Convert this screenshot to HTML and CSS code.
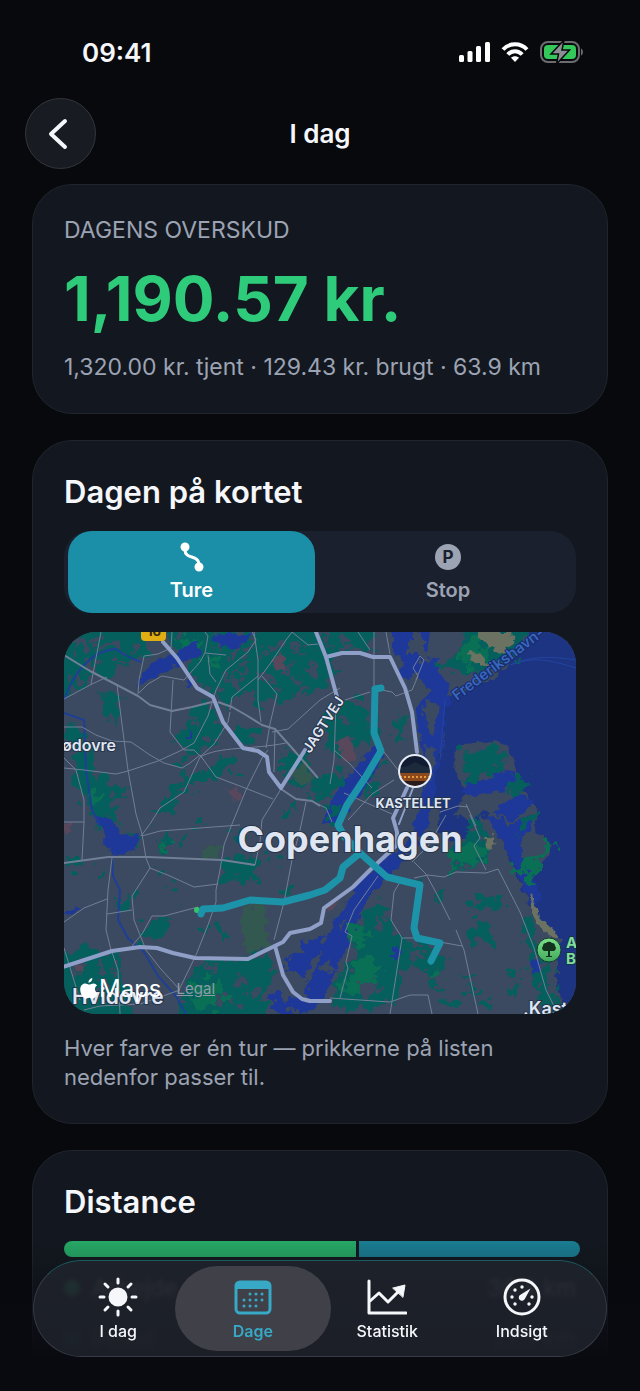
FILE: index.html
```html
<!DOCTYPE html>
<html lang="da">
<head>
  <meta charset="UTF-8">
  <meta name="viewport" content="width=device-width, initial-scale=1.0">
  <title>I dag</title>
  <link rel="stylesheet" href="styles.css">
</head>
<body>
  <div class="app">
    <div class="status-bar">
      <span class="status-time">09:41</span>
      <div class="status-icons">
        <svg width="31" height="20" viewBox="0 0 31 20" fill="#fff" aria-hidden="true">
          <rect x="0" y="13" width="5" height="7" rx="1.5"/>
          <rect x="8.500" y="9" width="5" height="11" rx="1.5"/>
          <rect x="17" y="4" width="5" height="16" rx="1.5"/>
          <rect x="26" y="0" width="5" height="20" rx="1.5"/>
        </svg>
        <svg width="28" height="20" viewBox="0 0 28 20" fill="none" stroke="#fff" stroke-width="4" aria-hidden="true">
          <path d="M2 7.500C8.500 .5 19.500 .5 26 7.500"/>
          <path d="M6.800 12.500C11 8 17 8 21.200 12.500"/>
          <path d="M14 20l-4-4.200c2.400-2 5.600-2 8 0z" fill="#fff" stroke="none"/>
        </svg>
        <svg width="44" height="22" viewBox="0 0 44 22" fill="none" aria-hidden="true">
          <rect x="1" y="1" width="38" height="20" rx="7" stroke="#6b6c70" stroke-width="2"/>
          <path d="M41 7.500c2.600 1 2.600 6 0 7z" fill="#6b6c70"/>
          <rect x="4" y="4" width="32" height="14" rx="4" fill="#34c759"/>
          <path d="M24 -1L11 13h7.500L16.500 23 29.500 9H22z" fill="#8b8f94" stroke="#08090d" stroke-width="1.500"/>
        </svg>
      </div>
    </div>

    <header class="nav-bar">
      <button class="back-button" aria-label="Tilbage">
        <svg width="20" height="32" viewBox="0 0 20 32" fill="none" stroke="#f5f7fb" stroke-width="4" stroke-linecap="round" stroke-linejoin="round"><path d="M17 3L3 16l14 13"/></svg>
      </button>
      <h1 class="nav-title">I dag</h1>
    </header>

    <main class="content">
      <section class="card summary">
        <h2 class="summary-label">DAGENS OVERSKUD</h2>
        <p class="summary-amount">1,190.57 kr.</p>
        <p class="summary-detail">1,320.00 kr. tjent · 129.43 kr. brugt · 63.9 km</p>
      </section>

      <section class="card">
        <h2 class="card-title">Dagen på kortet</h2>
        <div class="segments">
          <button class="segment active" aria-pressed="true">
            <svg width="24" height="30" viewBox="0 0 24 30" fill="none" stroke="#fff" stroke-width="3" stroke-linecap="round" aria-hidden="true">
              <circle cx="5" cy="5" r="3" fill="#fff"/>
              <circle cx="19" cy="25" r="3" fill="#fff"/>
              <path d="M5 8c0 10 14 4 14 15"/>
            </svg>
            <span>Ture</span>
          </button>
          <button class="segment" aria-pressed="false">
            <span class="parking-icon">P</span>
            <span>Stop</span>
          </button>
        </div>

        <div class="map">
          <svg class="map-canvas" viewBox="64 632 512 382" preserveAspectRatio="xMidYMid slice" role="img" aria-label="Copenhagen" color-interpolation-filters="sRGB">
            <defs>
              <linearGradient id="park-pin" x1="0" y1="0" x2="0" y2="1">
                <stop offset="0" stop-color="#7ee08a"/>
                <stop offset="1" stop-color="#3fa95a"/>
              </linearGradient>
              <clipPath id="photo-clip"><circle cx="415" cy="771" r="15"/></clipPath>
              <!-- roughens the edges of land use areas -->
              <filter id="rough" filterUnits="userSpaceOnUse" x="44" y="612" width="552" height="422">
                <feTurbulence type="fractalNoise" baseFrequency="0.09" numOctaves="3" seed="4"/>
                <feDisplacementMap in="SourceGraphic" scale="30" xChannelSelector="R" yChannelSelector="G"/>
              </filter>
              <filter id="rough-small" filterUnits="userSpaceOnUse" x="44" y="612" width="552" height="422">
                <feTurbulence type="fractalNoise" baseFrequency="0.12" numOctaves="2" seed="9"/>
                <feDisplacementMap in="SourceGraphic" scale="11" xChannelSelector="R" yChannelSelector="G"/>
              </filter>
            </defs>

            <g filter="url(#rough-small)">
              <!-- sea -->
              <path fill="#1d3483" d="M540 612L520 650 510 665 480 685 450 697 443 715 445 740 437 770 433 798 441 812 436 832 452 842 470 836 480 815 492 822 505 850 523 892 532 915 543 928 560 938 557 958 557 988 570 1034H596V612z"/>
              <path fill="#1e389a" d="M392 612H432L428 650 442 662 436 670 452 686 444 698 430 690 420 680 418 668 408 682 400 676 404 660 396 654 392 650z"/>
              <path fill="#1e389a" d="M432 690L452 696 446 712 444 740 438 770 434 800 428 826 414 850 392 874 372 892 358 918 346 948 334 976 318 1006 300 1014 288 1004 300 994 312 978 322 952 330 930 348 900 364 876 388 858 410 838 418 810 424 780 422 750 416 706z"/>
              <path fill="#1e389a" d="M378 744L384 756 364 790 346 812 336 824 324 824 326 808 344 780z"/>

              <!-- islands in the harbour -->
              <path fill="#3b4a60" d="M424 700l14 4-4 30-8-6zM426 744l10 6-4 30-8 10zM432 810l8-4-4 24-10 12z"/>
              <path fill="#3b4a60" d="M454 752l8-8 30-2 16 2 6 22 10 26 14 20-4 18 18 14-8 18-20 20-8-14-18-34-14-24-12 10-16-4 10-22-10-22z"/>
              <path fill="#1e389a" d="M466 780l22-2 18-8 14 8-20 14-26 4-14-4zM492 812l26-18 18 8-24 20zM504 834l10-12 18-6-4 16-12 18zM476 750l20 2 4 10-14-2z"/>
              <path fill="#1e389a" d="M488 816L502 818 530 868 542 900 530 906 514 866z"/>
            </g>

            <!-- parks -->
            <g fill="#055f5c" filter="url(#rough)">
              <path d="M54 622H146L150 650 140 664 124 662 110 680 94 668 80 690 54 704z"/>
              <path d="M166 622H226L250 636 256 660 232 672 216 690 200 684 190 668 178 660 170 644z"/>
              <path d="M256 622H316L332 660 334 682 318 692 300 690 284 704 270 696 262 710 250 690 236 694 228 712 218 704 222 682 252 668z"/>
              <path d="M328 622H370L372 648 344 650 330 656z"/>
              <path d="M184 722l18-20 14 10 8 20-16 20-10-4-8 12-10-18z"/>
              <path d="M234 728l14-4 10 12-8 10-12-6zM104 692l14-4 4 14-8 20-8-10z"/>
              <path d="M64 726l18-2 6 20 8 36-6 30-12-20-4-30-10-18z"/>
              <path d="M88 786l12-12 14 14-4 24 8 12-16 6-10-18zM114 788l14 2-6 8-10-2z"/>
              <path d="M170 792l14-14 24-8 14-14 12-2-4 14-16 10-24 8-16 16-14 16-8-4z"/>
              <path d="M170 762l12-4 6 8-6 4zM276 760l18-12 12 10 10 26-14 4-18-14z"/>
              <path d="M330 710l20-12 18 8 2 30-18 18-20-4-8-18zM310 790l16-18 20-4-8 22-18 14-10-4zM328 812l14-6-6 14-10 2z"/>
              <path d="M376 722l6 0 4 14-4 10zM396 712l6 6 6 26-8-4zM362 784l14-8 4 12-16 12z"/>
              <path d="M220 862l18-8 24 4-6 24-14 2-22-4zM158 840l10-12 4 22-8 6zM122 896l10-4-2 18-10 2zM166 886l8-2 2 8-8 2z"/>
              <path d="M142 924l12-8 16 4-6 14-22 8zM200 922l4 0 0 8-6 0zM216 928l10-2-2 16-6-2z"/>
              <path d="M54 950l36-4 26 8 4 22 14 18-4 40H64z"/>
              <path d="M196 968l22-12 28 6 20-10 8 26-12 20 8 36H186l-6-36 8-14z"/>
              <path d="M356 926l10-20 14-6 10 14 4 20 8 8-4 50-14 14-30 4-22-6 10-34 10-12z"/>
              <path d="M398 942h24l22 14 4 12-12 0 4 10-16 0-8-14-16 4z"/>
              <path d="M466 904l14-8 24-2-2 10-24 6-12-2zM466 924l12-4 14 8-2 16-14 0-10-6zM434 894l10-2 0 6-8 0zM462 974l12-2 2 6-12 2zM510 974l10-4 0 10-8 0z"/>
              <path d="M450 848l22-18 14 8 2 22-22 4-18 8zM470 822l8-6 12 26-12-2z"/>
              <path d="M522 924l10-8 6 34 14 10-2 20 16 54h-12l-20-50-8-30z"/>
              <path d="M282 886l10 0 4 8-12 4zM288 802l10 0-4 10-8-2zM436 666l20-14 12-40h68l-16 40-24 14-22 12-24-6z"/>
              <path d="M458 756l28-12 14 8 4 16-12 2-12 10-20-6zM506 784l14-8 8 10-16 10zM522 820l12-6-4 12-10 4z"/>
              <path d="M70 858l10 2-6 10-6-2zM96 876l10-8 2 4-10 10zM154 866l8-2 2 6-8 2zM266 856l8-2 0 8-8 0z"/>
              <path d="M440 1000l12-4 6 8-14 4zM430 984l8-4 4 8-10 2zM484 1000l10-2 2 8-10 2zM466 992l12-4 0 8-10 2zM508 990l10-2 2 8-10 0z"/>
              <path d="M180 836l8-2 2 8-8 2zM234 834l10-4 2 8-10 2zM196 820l8 0-2 8-8 0zM162 806l8 0 2 6-8 2zM128 836l6-2 2 6-6 2zM238 774l8-2 0 6-8 2zM380 764l6-2 0 8-6 0zM414 880l10-2 0 8-8 0z"/>
            </g>
            <g fill="#0a7055" filter="url(#rough)">
              <path d="M182 642l14-8 6 10-8 10-12-2zM456 650l20-14 14 20-24 12zM212 660l8-2-2 10-8 2zM352 962l14-6 12 14-4 18-20 8-12-8zM448 850l26-6 12 14-24 6-16 4z"/>
              <path d="M190 986l22-10 16 12-6 18-24 4zM90 794l8-4 4 12-8 4zM350 930l10-4 8 12-10 8zM166 844l8 4-4 6-6-2zM428 972l12-4 4 8-14 2zM540 850l10-4-4 14-12 6z"/>
              <path d="M512 868l22-8 18-20 4 6-16 20-6 16-6-8-14 2z"/>
            </g>

            <!-- built-up speckles inside the parks -->
            <g fill="#3b4a60" filter="url(#rough)">
              <path d="M74 644l10-4 4 8-10 4zM104 640l12 0 2 6-12 4zM126 648l8-4 4 6-8 4zM84 664l10-2 2 8-10 2zM176 634l8 0 0 6-6 0zM214 636l10 2-4 8-8-2z"/>
              <path d="M228 650l8-2 4 8-10 4zM244 644l6 4-4 8-6-4zM270 642l12 2-2 8-10-2zM292 636l10 4-4 8-8-4zM284 662l10 2 0 10-10-2zM306 664l8 2 2 10-8-2z"/>
              <path d="M264 672l8 4-4 8-8-2zM236 676l8 0 0 8-8 2zM340 636l12 4-2 6-10-2zM192 716l8 2-4 8-6-4zM206 732l6 2-4 8-6-4zM340 716l8 0 2 8-8 2zM346 738l8-2 0 6-8 2z"/>
              <path d="M72 962l10-2 4 8-10 4zM100 962l8 0 2 8-8 2zM96 984l10-2 4 8-12 2zM206 966l10-2 2 8-10 2zM236 978l10-2 4 8-10 4zM222 1000l10-2 4 8-10 2zM248 990l8-2 2 6-8 4z"/>
              <path d="M360 984l14-4 4 14-12 8-8-6zM350 950l8-2 2 8-8 4zM376 918l6-2 4 8-8 2zM410 952l10 0 2 8-10 2zM536 958l8-2 6 8-8 4zM440 656l10-6 4 4-10 8zM452 676l16-6 8 4-14 8z"/>
              <path d="M90 636l6 0 2 6-8 2zM70 676l8-4 2 6-8 6zM118 656l6 0 0 6-6 0zM262 650l6 0 0 6-6 2zM300 650l6 2-2 6-6-2zM296 680l8-2 0 6-8 2zM276 684l6 0 0 8-6 0zM244 662l6 0-2 6-6 0z"/>
              <path d="M402 636h28l-2 12 10 6-8 10-16-6-8-10z"/>
              <path d="M336 926l8-12 4 6-8 12zM320 966l10-6 0 8-8 8zM300 998l10-10 2 8-8 8zM404 850l10-10 4 4-10 12z"/>
            </g>
            <g filter="url(#rough-small)">
              <path fill="#6b7262" d="M476 632H512L514 644 500 654 488 646zM470 652l12 2 8 8-8 4-14-6zM484 838l8-4 6 10-8 6zM531 896l4 4 4 16 14 14 6 8-10-2-14-16-6-14z"/>
              <path fill="#59485c" d="M272 662l8-10 8 8-4 8-8 2zM338 740l10-6 8 20-6 10-8-6zM228 790l10-2 4 10-10 2zM76 966l8 0-2 8-6-2zM64 822l8 2-2 10-6 0zM328 904l10-6-2 10-8 6z"/>
              <path fill="#33584f" d="M242 908l22-4 4 44-20 4-6-14zM290 770l16-6 8 16-14 6zM202 848l20-2-4 12-14 0z"/>

              <!-- lakes -->
              <path fill="#1e389a" d="M138 688l6-18 16-12 14-2 10-10 14-4 4 12-18 8-14 6-14 10-12 2zM212 642l4-8h38l-8 8-14 8-10-6zM184 684l8-6 2 6-8 4z"/>
              <path fill="#1e389a" d="M96 816l14 4 10 10 8 8 12-6-4 16-12 8-14-2-6-18z"/>
              <path fill="#1e389a" d="M185 736l8-6-2 6-6 4zM64 912l14-4 0 4-10 4zM392 950l8-4-4 14-4 0zM530 962l8-2 2 12-8 2z"/>
            </g>
            <path fill="#1e389a" filter="url(#rough)" d="M286 958l10-6 18-18 8 6-6 24-14 14-14-8zM266 1000l20-6 8 14-20 6z"/>
            <g fill="none" stroke="#1f3f96" stroke-width="2">
              <path d="M64 700C74 672 92 650 116 649C126 656 134 660 142 662M64 713L84 720 86 770 92 810 100 826M112 856L113 876 120 890 118 920 128 938 144 952 158 976 176 996 186 1014"/>
              <path d="M510 665C530 656 550 656 576 660M510 665C534 656 550 660 576 668M445 700L440 760" stroke="#24459f" stroke-width="1"/>
            </g>

            <!-- minor roads -->
            <g fill="none" stroke="#717f96" stroke-width="1" stroke-linejoin="round">
              <path stroke-width="2" d="M64 655L90 671 117 685 138 696 150 705 172 711 192 707 212 702M218 702L232 707 246 715 262 725 275 729 292 748 318 778"/>
              <path d="M64 699L90 685 107 677M101 632L91 684M117 685L124 740 128 770 136 814 142 834 146 858"/>
              <path d="M64 727L82 727 96 735 112 741 131 742 150 755 164 763 182 768 190 763 200 755 216 777 240 786 273 799"/>
              <path d="M64 768L84 770 116 774 128 771 158 761 182 750 194 743 208 716 216 690 226 670 248 652 256 640 252 632"/>
              <path d="M173 680L170 732 184 750 194 750 204 760M138 694L139 680 144 656 158 654 171 648 172 632M139 693L148 684 162 676 184 680 200 662 205 653 226 655"/>
              <path d="M205 653L208 636 205 632M208 655L210 674 216 682M230 712L228 722 214 744 200 757 184 792 160 808 150 824 141 836"/>
              <path d="M200 757C220 746 250 750 286 743M268 750L262 758 246 790 232 824 224 845 220 870 216 890 216 902 208 925 196 955 178 992"/>
              <path d="M254 632L258 660 258 700 261 722M262 676L277 694 270 724 266 748M258 676L232 697 230 710M258 680L270 664 286 640 292 632 308 645 318 644"/>
              <path d="M272 732L288 729 320 700 340 688M275 730L274 772M281 789L262 820 260 842 255 865M306 802L300 830 292 860 284 902 274 940"/>
              <path stroke-width="2" d="M281 789L296 799 312 801 320 806M64 863L108 857 148 857 222 860 255 865"/>
              <path d="M64 822H84L82 860M142 836L160 831 240 825M64 758L76 770 84 800 84 822"/>
              <path d="M146 858L150 868 132 896 134 920 146 950 160 968 180 990M150 868L170 876 194 887 218 884M64 922L84 908 107 899M112 858L108 890 106 930 111 950M107 914L132 910M132 946L142 934 152 916 164 916 198 907"/>
              <path d="M64 948L80 1000M112 952L118 970 120 1014M84 1010L100 1006 140 1004 180 990"/>
              <path d="M374 632V686M358 632L370 650M386 632L390 654M345 700L370 692M382 690L392 692 396 696 412 690 418 676 413 668 420 656 424 660 416 680"/>
              <path d="M336 704L334 760 330 784M334 750L350 764 372 788M384 752L398 770M344 793L360 800 392 814M348 820L372 794 394 780M310 800L326 808 332 822"/>
              <path d="M468 807L458 806 440 812M466 804L476 826M470 815L480 838 474 846 486 870M414 862L426 874 440 900 450 920M456 930L464 950 478 1014"/>
              <path d="M414 878L428 875 444 877 456 872 486 873 498 869 520 912 534 948 546 990 556 1010M446 815L428 846 412 862"/>
              <path d="M400 882L394 892 391 920 402 938 390 1014M402 938H414M440 942L462 946M378 876L354 910 345 932 352 936 346 962 348 968 340 998M330 998L390 1002 410 995 428 995 432 1014"/>
            </g>

            <!-- main roads -->
            <g fill="none" stroke="#8f9fc8" stroke-width="4" stroke-linejoin="round" stroke-linecap="round">
              <path d="M163 642L177 658 197 688 213 697 223 722 243 748 258 751 267 757 269 772 281 788 305 750M337 697L326 657 316 632"/>
              <path d="M326 657L342 653 360 653 373 657 390 657 405 688 412 712 417 752M407 788L393 818 397 832V845L370 870 353 887 324 908 321 923 310 929 290 933 283 942 248 959 195 958 173 953 157 948 140 947 112 951 63 967"/>
              <path d="M413 788L399 824" stroke-width="2"/>
              <path d="M275 946L283 975 293 992 302 999 310 1001 330 1001"/>
            </g>

            <!-- trips -->
            <circle cx="197" cy="910" r="3" fill="#35c46b"/>
            <g fill="none" stroke="#1d93aa" stroke-width="7" stroke-linejoin="round" stroke-linecap="round">
              <path d="M381 688L375 689 374 733 381 751 365 778 347 805 338 825 344 836 360 853 387 877 420 885 414 928 417 938 440 943 431 961"/>
              <path d="M360 853L343 867 340 878 325 890 310 895 283 902 250 900 223 908 203 909 201 914"/>
            </g>

            <!-- places -->
            <rect x="141" y="622" width="25" height="19" rx="4" fill="#e0ae12"/>
            <text class="road-sign" x="154" y="636" text-anchor="middle">16</text>
            <g class="place">
              <text x="62" y="751" font-size="16">ødovre</text>
              <text x="350" y="852" font-size="36" font-weight="700" text-anchor="middle">Copenhagen</text>
              <text x="413" y="808" font-size="13" font-weight="700" text-anchor="middle">KASTELLET</text>
              <text x="72" y="1004" font-size="21">Hvidovre</text>
              <text x="523" y="1015" font-size="18">.Kast</text>
              <text x="310" y="754" font-size="14" transform="rotate(-57 310 754)">JAGTVEJ</text>
            </g>
            <text class="sea-label" x="457" y="701" transform="rotate(-37 457 701)">Frederikshavn-</text>
            <g clip-path="url(#photo-clip)">
              <path fill="#111c33" d="M398 754h34v34h-34z"/>
              <path fill="#1d2a3c" d="M398 768l10-2 7-4 8 4 9 2v8h-34z"/>
              <path fill="#8c4a1c" d="M398 773h34v8h-34z"/>
              <path stroke="#e59a45" stroke-width="2" stroke-dasharray="2 2" d="M400 777h30"/>
              <path fill="#2a1b1c" d="M398 781h34v8h-34z"/>
            </g>
            <circle cx="415" cy="771" r="16" fill="none" stroke="#e6ecf6" stroke-width="2"/>
            <circle cx="549" cy="950" r="12" fill="url(#park-pin)" stroke="#15392f"/>
            <path fill="#14301f" d="M548 951h-4a3 3 0 0 1-1-5 3 3 0 0 1 3-3 4 4 0 0 1 6 0 3 3 0 0 1 3 3 3 3 0 0 1-1 5h-4v5h2v1h-6v-1h2z"/>
            <g class="park-label">
              <text x="566" y="948">A</text>
              <text x="566" y="964">B</text>
            </g>
          </svg>
          <div class="map-credit">
            <svg width="18" height="22" viewBox="0 0 16 20" fill="#fff" aria-hidden="true">
              <path d="M11 0c.2 2-1.400 4.200-3.500 4.300C7.300 2.300 9 .3 11 0zM15.300 6.800c-2.800 1.800-2.400 5.400.7 6.700-.8 2.400-2.500 5.300-4.300 5.300-1.300 0-1.700-.8-3.300-.8s-2.100.8-3.300.8C2.600 18.800 0 14.300 0 10.500 0 7 2.200 5 4.500 5c1.500 0 2.700 1 3.700 1s2.200-1 4-1c1.200 0 2.400.7 3.100 1.800z"/>
            </svg>
            <span class="map-brand">Maps</span>
            <a class="map-legal" href="#legal">Legal</a>
          </div>
        </div>

        <p class="map-note">Hver farve er én tur — prikkerne på listen nedenfor passer til.</p>
      </section>

      <section class="card distance">
        <h2 class="card-title">Distance</h2>
        <div class="split-bar">
          <span class="split work" style="flex-grow: 57"></span>
          <span class="split private" style="flex-grow: 43"></span>
        </div>
        <ul class="legend">
          <li><span class="dot work"></span>Arbejde<span class="legend-value">36.4 km</span></li>
          <li><span class="dot private"></span>Privat<span class="legend-value">27.5 km</span></li>
        </ul>
      </section>
    </main>

    <nav class="tab-bar">
      <a class="tab" href="#today">
        <svg width="40" height="40" viewBox="0 0 40 40" stroke="#f5f7fb" stroke-width="3" stroke-linecap="round" aria-hidden="true">
          <circle cx="20" cy="20" r="8" fill="#f5f7fb"/>
          <path d="M20 2v4M20 34v4M2 20h4M34 20h4M7 7l3 3M30 30l3 3M7 33l3-3M30 10l3-3"/>
        </svg>
        <span>I dag</span>
      </a>
      <a class="tab active" href="#days" aria-current="page">
        <svg width="40" height="40" viewBox="0 0 40 40" aria-hidden="true">
          <rect x="3" y="5" width="34" height="31" rx="4" fill="none" stroke="#37a9c6" stroke-width="3"/>
          <path d="M3 5h34v7H3z" fill="#37a9c6"/>
          <path d="M17 17h13M11 23h19M11 29h13" fill="none" stroke="#37a9c6" stroke-width="3" stroke-dasharray="0 6" stroke-linecap="round"/>
        </svg>
        <span>Dage</span>
      </a>
      <a class="tab" href="#stats">
        <svg width="40" height="40" viewBox="0 0 40 40" fill="none" stroke="#f5f7fb" stroke-width="3" stroke-linecap="round" stroke-linejoin="round" aria-hidden="true">
          <path d="M2 4v32h37"/>
          <path d="M3 24l9-8 9 9L33 13"/>
          <path d="M26 11l12-3-2 12z" fill="#f5f7fb" stroke-width="1"/>
        </svg>
        <span>Statistik</span>
      </a>
      <a class="tab" href="#insight">
        <svg width="40" height="40" viewBox="0 0 40 40" fill="#f5f7fb" aria-hidden="true">
          <circle cx="20" cy="20" r="17" fill="none" stroke="#f5f7fb" stroke-width="3"/>
          <path d="M28.500 11.500L22.800 22a3.200 3.200 0 1 1-4.800-4z"/>
          <circle cx="20" cy="10" r="1.700"/>
          <circle cx="13" cy="13" r="1.700"/>
          <circle cx="10" cy="20" r="1.700"/>
          <circle cx="30" cy="20" r="1.700"/>
          <circle cx="13" cy="27" r="1.700"/>
          <circle cx="27" cy="27" r="1.700"/>
        </svg>
        <span>Indsigt</span>
      </a>
    </nav>
  </div>
</body>
</html>
```
FILE: styles.css
```css
* {
  box-sizing: border-box;
}

body {
  margin: 0;
  background: #08090d;
  color: #f5f7fb;
  font-family: Inter, "Liberation Sans", sans-serif;
}

h1, h2, p, ul {
  margin: 0;
  padding: 0;
  font-weight: inherit;
}

button {
  border: none;
  font: inherit;
  cursor: pointer;
}

.app {
  position: relative;
  height: 100vh;
  overflow: hidden;
}

/* Status bar */
.status-bar {
  display: flex;
  align-items: center;
  justify-content: space-between;
  height: 98px;
  padding: 6px 56px 0 82px;
}

.status-time {
  font-size: 26px;
  font-weight: 600;
}

.status-icons {
  display: flex;
  align-items: center;
  gap: 11px;
}

/* Navigation */
.nav-bar {
  display: grid;
  grid-template-columns: 72px 1fr 72px;
  align-items: center;
  padding: 0 25px;
}

.back-button {
  display: flex;
  align-items: center;
  justify-content: center;
  width: 71px;
  height: 71px;
  padding: 0 6px 0 0;
  border: 1px solid #33363c;
  border-radius: 50%;
  background: #181b21;
}

.nav-title {
  font-size: 26px;
  font-weight: 600;
  text-align: center;
}

/* Cards */
.content {
  display: flex;
  flex-direction: column;
  gap: 26px;
  padding: 15px 32px;
}

.card {
  padding: 31px;
  border: 1px solid #20242c;
  border-radius: 40px;
  background: #131820;
}

.card-title {
  font-size: 31px;
  font-weight: 600;
  line-height: 40px;
}

.summary-label,
.summary-detail {
  color: #9ca3b3;
  font-size: 23px;
  line-height: 29px;
}

.summary-amount {
  padding: 15px 0;
  color: #2ecb7a;
  font-size: 62px;
  font-weight: 700;
  line-height: 78px;
}

/* Segmented control */
.segments {
  display: grid;
  grid-template-columns: 1fr 1fr;
  margin-top: 19px;
  border-radius: 26px;
  background: #1a202e;
}

.segment {
  display: flex;
  flex-direction: column;
  align-items: center;
  gap: 6px;
  padding: 11px 0 10px;
  border-radius: 24px;
  background: none;
  color: #9ca3b3;
  font-size: 20px;
  font-weight: 600;
  line-height: 25px;
}

.segment.active {
  margin: 0 5px 0 4px;
  background: #1c8fa8;
  color: #fff;
}

.parking-icon {
  width: 26px;
  height: 26px;
  margin: 2px 0;
  border-radius: 50%;
  background: #9ca3b3;
  color: #1a202e;
  font-size: 17px;
  font-weight: 700;
  line-height: 26px;
}

/* Map */
.map {
  position: relative;
  margin: 19px 0 20px;
  overflow: hidden;
  border-radius: 32px;
  background: #3b4a60;
}

.map-canvas {
  display: block;
  width: 100%;
}

.map-note {
  color: #9ca3b3;
  font-size: 22px;
  line-height: 29px;
}

.place {
  fill: #dfe6f2;
  stroke: #28344a;
  stroke-width: 2px;
  paint-order: stroke;
  font-weight: 600;
}

.road-sign {
  fill: #30290f;
  font-size: 13px;
  font-weight: 700;
}

.sea-label {
  fill: #3767bd;
  stroke: #182a6c;
  stroke-width: 2px;
  paint-order: stroke;
  font-size: 15px;
  font-weight: 600;
}

.park-label {
  fill: #7fdc9c;
  stroke: #17344a;
  stroke-width: 2px;
  paint-order: stroke;
  font-size: 15px;
  font-weight: 700;
}

.map-credit {
  position: absolute;
  bottom: 11px;
  left: 16px;
  display: flex;
  align-items: center;
  gap: 1px;
}

.map-brand {
  color: #fff;
  font-size: 24px;
}

.map-legal {
  margin-left: 14px;
  color: #8c9bab;
  font-size: 15px;
}

/* Distance */
.split-bar {
  display: flex;
  gap: 3px;
  margin: 19px -4px 16px 0;
  overflow: hidden;
  border-radius: 8px;
}

.split {
  height: 16px;
}

.work {
  background: #26a765;
}

.private {
  background: #1a7c91;
}

.legend {
  display: flex;
  flex-direction: column;
  gap: 22px;
  color: #9ca3b3;
  font-size: 23px;
  line-height: 30px;
  list-style: none;
}

.legend li {
  display: flex;
  align-items: center;
  gap: 12px;
}

.dot {
  width: 16px;
  height: 16px;
  border-radius: 50%;
}

.legend-value {
  margin-left: auto;
}

/* Tab bar */
.app::after {
  content: "";
  position: absolute;
  right: 0;
  bottom: 0;
  left: 0;
  height: 150px;
  background: linear-gradient(transparent, #090a0f 80%);
}

.tab-bar {
  position: absolute;
  z-index: 1;
  right: 33px;
  bottom: 34px;
  left: 33px;
  display: flex;
  padding: 5px 17px;
  border: 1px solid #373b46;
  border-top-color: #1c5a60;
  border-radius: 49px;
  background: rgba(32, 35, 44, 0.85);
  backdrop-filter: blur(2px);
}

.tab {
  display: flex;
  flex: 1;
  flex-direction: column;
  align-items: center;
  gap: 4px;
  padding: 11px 0 10px;
  border-radius: 43px;
  color: #f5f7fb;
  font-size: 16px;
  font-weight: 500;
  line-height: 20px;
  text-decoration: none;
}

.tab.active {
  flex: 1 0 22px;
  margin: 0 -11px;
  background: #3f4048;
  color: #37a9c6;
  font-weight: 600;
}
```
